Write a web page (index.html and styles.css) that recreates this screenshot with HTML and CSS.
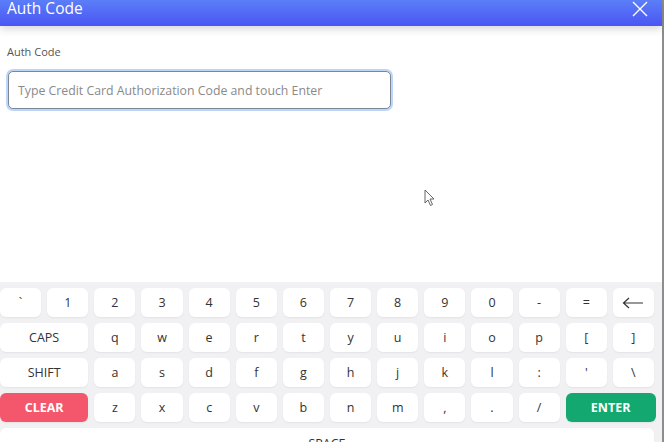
FILE: index.html
```html
<!DOCTYPE html>
<html lang="en">
<head>
<meta charset="utf-8">
<title>Auth Code</title>
<link rel="stylesheet" href="styles.css">
</head>
<body>
<div class="app">
  <header class="topbar">
    <h1 class="title">Auth Code</h1>
    <button class="close" aria-label="Close">
      <svg width="16" height="16" viewBox="0 0 16 16"><path d="M1 1L15 15M15 1L1 15" stroke="#fff" stroke-width="1.4" fill="none"/></svg>
    </button>
  </header>

  <main class="content">
    <label class="field-label" for="auth">Auth Code</label>
    <input id="auth" class="field" type="text" placeholder="Type Credit Card Authorization Code and touch Enter">
  </main>

  <section class="keyboard">
    <div class="keys">
      <button class="key">`</button><button class="key">1</button><button class="key">2</button><button class="key">3</button><button class="key">4</button><button class="key">5</button><button class="key">6</button><button class="key">7</button><button class="key">8</button><button class="key">9</button><button class="key">0</button><button class="key">-</button><button class="key">=</button>
      <button class="key" aria-label="Backspace"><svg width="22" height="12" viewBox="0 0 22 12"><path d="M21 6H2M7 1L1.5 6L7 11" stroke="#333" stroke-width="1.2" fill="none"/></svg></button>

      <button class="key wide">CAPS</button><button class="key">q</button><button class="key">w</button><button class="key">e</button><button class="key">r</button><button class="key">t</button><button class="key">y</button><button class="key">u</button><button class="key">i</button><button class="key">o</button><button class="key">p</button><button class="key">[</button><button class="key">]</button>

      <button class="key wide">SHIFT</button><button class="key">a</button><button class="key">s</button><button class="key">d</button><button class="key">f</button><button class="key">g</button><button class="key">h</button><button class="key">j</button><button class="key">k</button><button class="key">l</button><button class="key">:</button><button class="key">'</button><button class="key">\</button>

      <button class="key wide clear">CLEAR</button><button class="key">z</button><button class="key">x</button><button class="key">c</button><button class="key">v</button><button class="key">b</button><button class="key">n</button><button class="key">m</button><button class="key">,</button><button class="key">.</button><button class="key">/</button><button class="key wide enter">ENTER</button>

      <button class="key space">SPACE</button>
    </div>
  </section>

  <svg class="pointer" width="12" height="18" viewBox="0 0 12 18"><path d="M1 1V14L4 11L6.5 16.5L8.5 15.5L6 10H10Z" fill="#fff" stroke="#555" stroke-width="0.9"/></svg>
</div>
</body>
</html>
```

FILE: styles.css
```css
* { box-sizing: border-box; }

html, body {
  margin: 0;
  padding: 0;
  height: 100%;
  background: #fff;
  overflow: hidden;
}

body {
  font-family: "Open Sans", "Noto Sans", sans-serif;
  color: #333;
}

.app {
  position: relative;
  width: 664px;
  height: 442px;
  border-right: 2px solid #8d8d8d;
  display: flex;
  flex-direction: column;
  background: #fff;
}

.topbar {
  height: 26px;
  flex: none;
  display: flex;
  align-items: flex-start;
  justify-content: space-between;
  padding: 0 14px 0 7px;
  background: linear-gradient(180deg, #5b7ef8 0%, #4b55f3 100%);
  box-shadow: 0 3px 8px rgba(0, 0, 0, 0.16);
  position: relative;
  z-index: 1;
}

.title {
  margin: 0;
  font-size: 15.5px;
  font-weight: 400;
  color: #fff;
  line-height: 17px;
}

.close {
  border: 0;
  background: none;
  padding: 0;
  margin-top: 1px;
  width: 16px;
  height: 16px;
  display: flex;
}

.content {
  flex: 1;
  padding: 19px 7px 0 7px;
  display: flex;
  flex-direction: column;
  align-items: flex-start;
}

.field-label {
  font-size: 11px;
  color: #555;
  line-height: 14px;
  margin-bottom: 12px;
}

.field {
  width: 383px;
  height: 38px;
  border: 1px solid #7f8694;
  border-radius: 5px;
  box-shadow: 0 0 0 2px #bcd6fb;
  padding: 0 9px;
  font-family: inherit;
  font-size: 12.3px;
  color: #333;
  outline: none;
  margin-left: 1px;
}

.field::placeholder {
  color: #8a8a8a;
}

.keyboard {
  flex: none;
  height: 160px;
  background: #f1f1f4;
  padding: 6px 0 0 0;
}

.keys {
  display: grid;
  grid-template-columns: repeat(14, 41.15px);
  grid-auto-rows: 29px;
  gap: 6px;
}

.key {
  border: 0;
  border-radius: 6px;
  background: #fff;
  box-shadow: 0 1px 2px rgba(0, 0, 0, 0.06);
  font-family: inherit;
  font-size: 12.5px;
  color: #333;
  padding: 0;
  display: flex;
  align-items: center;
  justify-content: center;
}

.wide {
  grid-column: span 2;
}

.clear {
  background: #f4566b;
  color: #fff;
  font-weight: 700;
}

.enter {
  background: #12a86f;
  color: #fff;
  font-weight: 700;
  width: 90px;
}

.space {
  grid-column: 1 / -1;
  align-items: flex-start;
  padding-top: 7px;
}

.pointer {
  position: absolute;
  left: 424px;
  top: 189px;
}
```
